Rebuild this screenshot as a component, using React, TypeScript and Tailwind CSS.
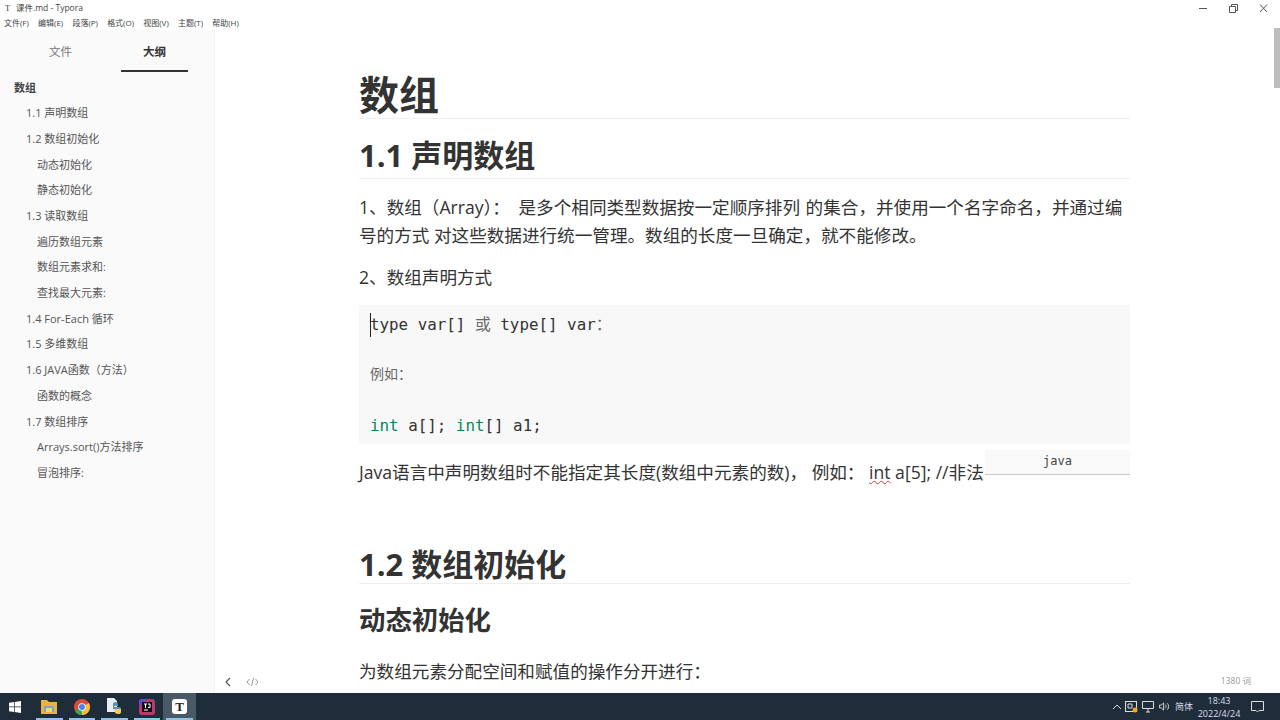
import React from "react";

const outline: [string, number][] = [
  ["1.1 声明数组", 1],
  ["1.2 数组初始化", 1],
  ["动态初始化", 2],
  ["静态初始化", 2],
  ["1.3 读取数组", 1],
  ["遍历数组元素", 2],
  ["数组元素求和:", 2],
  ["查找最大元素:", 2],
  ["1.4 For-Each 循环", 1],
  ["1.5 多维数组", 1],
  ["1.6 JAVA函数（方法）", 1],
  ["函数的概念", 2],
  ["1.7 数组排序", 1],
  ["Arrays.sort()方法排序", 2],
  ["冒泡排序:", 2],
];
const menus = ["文件(F)", "编辑(E)", "段落(P)", "格式(O)", "视图(V)", "主题(T)", "帮助(H)"];
const ui = "font-['Open_Sans','Noto_Sans_CJK_SC',sans-serif]";

function Running({ active, children }: { active?: boolean; children: React.ReactNode }) {
  return (
    <div className={`relative flex h-full w-[32.6px] items-center justify-center ${active ? "bg-[#4a5966]" : ""}`}>
      {children}
      <div className="absolute bottom-0 left-[3px] right-[3px] h-[2px] bg-[#8fc3e8]" />
    </div>
  );
}

export default function App() {
  return (
    <div className={`flex h-[720px] w-[1280px] flex-col overflow-hidden bg-white text-[#333] ${ui}`}>
      <div className="flex h-[15px] shrink-0 items-center pl-[5px] pt-[1px] text-[8.5px] text-[#444]">
        <span className="w-[11px] font-['Liberation_Serif',serif]">T</span>
        <span>课件.md - Typora</span>
        <div className="ml-auto flex items-center">
          <svg width="100" height="15" viewBox="0 0 100 15" fill="none" stroke="#555" strokeWidth="1">
            <path d="M19 7.500h8" />
            <path d="M49.500 5.500h6v6h-6zM51.500 5.500v-2h6v6h-2" />
            <path d="M80 3.500l7 7.500M87 3.500l-7 7.500" />
          </svg>
        </div>
      </div>
      <div className="flex h-[15px] shrink-0 items-center gap-[9.200px] pl-[4px] text-[8px] text-[#444]">
        {menus.map((m) => (
          <span key={m}>{m}</span>
        ))}
      </div>

      <div className="relative flex min-h-0 flex-1">
        <aside className="flex w-[215px] shrink-0 flex-col border-r border-[#f3f3f3] bg-[#fafafa]">
          <div className="flex h-[42px] shrink-0 pl-[27px] text-[11.5px]">
            <div className="flex w-[67px] items-start justify-center pt-[13px] text-[#777]">文件</div>
            <div className="ml-[27px] flex h-[42px] w-[67px] items-start justify-center border-b-[2px] border-[#333] pt-[13px] font-bold text-[#333]">
              大纲
            </div>
          </div>
          <div className="flex flex-col pt-[3px] text-[11px] text-[#555]">
            <div className="flex h-[25.7px] items-center pl-[14px] font-bold text-[#444]">数组</div>
            {outline.map(([t, l]) => (
              <div key={t} className={`flex h-[25.7px] items-center ${l === 1 ? "pl-[26px]" : "pl-[37px]"}`}>
                {t}
              </div>
            ))}
          </div>
        </aside>

        <main className="min-w-0 flex-1 overflow-hidden pl-[144px] pr-[150px] text-[17.6px] text-[#333]">
          <h1 className="mt-[37px] h-[52px] border-b border-[#eee] text-[40px] font-bold leading-[56px]">数组</h1>
          <h2 className="mt-[8px] h-[52px] border-b border-[#eee] text-[31px] font-bold leading-[56px]">1.1 声明数组</h2>
          <p className="mt-[14px] whitespace-nowrap leading-[28px]">
            1、数组（Array）： <span className="ml-[4px]">是多个相同类型数据按一定顺序排列</span> <span className="ml-[1px]">的集合，并使用一个名字命名，并通过编</span>
            <br />
            号的方式 对这些数据进行统一管理。数组的长度一旦确定，就不能修改。
          </p>
          <p className="mt-[14px] leading-[28px]">2、数组声明方式</p>
          <div className="relative mt-[14px] h-[139px] bg-[#f8f8f8] pl-[11px] pt-[7px] font-['DejaVu_Sans_Mono','Noto_Sans_CJK_SC',monospace] text-[15.85px] leading-[25.2px] text-[#333]">
            <div className="absolute left-[11px] top-[8px] h-[24px] w-px bg-[#222]" />
            <div>type var[] <span className="text-[#666]">或</span> type[] var<span className="text-[#666]">：</span></div>
            <div className="h-[25.2px]" />
            <div className="text-[14px] text-[#666]">例如：</div>
            <div className="h-[25.2px]" />
            <div><span className="text-[#008855]">int</span> a[]; <span className="text-[#008855]">int</span>[] a1;</div>
            <div className="absolute right-0 top-[145px] flex h-[25px] w-[145px] items-center justify-center border-b border-[#c8c8c8] bg-[#f9f9f9] text-[12px] text-[#444]">
              java
            </div>
          </div>
          <p className="mt-[14px] leading-[28px] whitespace-nowrap">
            Java语言中声明数组时不能指定其长度(数组中元素的数)， 例如： <span className="underline decoration-wavy decoration-[#d33] decoration-1">int</span> a[5]; //非法
          </p>
          <h2 className="mt-[62px] h-[36px] border-b border-[#eee] text-[31px] font-bold leading-[32px]">1.2 数组初始化</h2>
          <h3 className="mt-[18px] text-[26.4px] font-bold leading-[36px]">动态初始化</h3>
          <p className="mt-[19px] leading-[28px]">为数组元素分配空间和赋值的操作分开进行：</p>
        </main>

        <div className="absolute right-0 top-[-2px] h-[60px] w-[6px] bg-[#bdbdbd]" />
        <div className="absolute bottom-0 left-[216px] right-0 flex h-[23px] items-center pl-[8px] pr-[29px] text-[#888]">
          <svg width="8" height="10" viewBox="0 0 8 10" fill="none" stroke="#555" strokeWidth="1.2"><path d="M6 1L2 5l4 4" /></svg>
          <svg className="ml-[14px]" width="13" height="10" viewBox="0 0 13 10" fill="none" stroke="#999" strokeWidth="1"><path d="M3.500 2L1 5l2.500 3M9.500 2L12 5 9.500 8M7.500 1L5.500 9" /></svg>
          <span className="ml-auto text-[8.5px] text-[#999]">1380 词</span>
        </div>
      </div>

      <footer className="flex h-[27px] shrink-0 items-center bg-[#1f2d3a] text-white">
        <div className="flex w-[33px] justify-center pr-[3px]">
          <svg width="12" height="12" viewBox="0 0 12 12" fill="#fff"><path d="M0 1.800l5-.7v4.500H0zM5.700 1l6.300-1v5.600H5.700zM0 6.300h5v4.600l-5-.7zM5.700 6.300H12V12l-6.300-1z" /></svg>
        </div>
        <div className="flex h-full items-center">
          <Running>
            <svg width="16" height="14" viewBox="0 0 16 14"><path d="M0 0h6l2 2h8v12H0z" fill="#e8b33f" /><path d="M3 6h10v6H3z" fill="#7aa7c7" /><path d="M5 8h6v4H5z" fill="#f4d57e" /></svg>
          </Running>
          <Running>
            <svg width="16" height="16" viewBox="0 0 16 16"><circle cx="8" cy="8" r="8" fill="#e04a3a" /><path d="M8 8L1 12a8 8 0 0 0 7 4z" fill="#3aa757" /><path d="M8 8l6.900-4a8 8 0 0 1-6.900 12z" fill="#fbc02d" /><circle cx="8" cy="8" r="3.800" fill="#fff" /><circle cx="8" cy="8" r="3" fill="#4285f4" /></svg>
          </Running>
          <Running>
            <svg width="16" height="17" viewBox="0 0 16 17"><path d="M1 0h7l3 3v11H1z" fill="#e8edf2" /><path d="M7 6c0-1 1-2 2.500-2S12 5 12 6v2H8v1h5c1.500 0 2 .8 2 2H7z" fill="#5a8fc0" /><path d="M7 11h8v3c0 1.500-1 2-3 2s-3-.8-3-2v-1z" fill="#f0cf55" /></svg>
          </Running>
          <Running>
            <svg width="16" height="16" viewBox="0 0 16 16"><rect width="16" height="16" rx="3" fill="#c0366f" /><path d="M0 8V3a3 3 0 0 1 3-3h5z" fill="#5b4dc7" /><rect x="3" y="3" width="10" height="10" fill="#111" /><path d="M5 5h3M6.500 5v4M9 5h2v3.500H9M5 11h4" stroke="#fff" strokeWidth="1" fill="none" /></svg>
          </Running>
          <Running active>
            <div className="flex h-[15px] w-[15px] items-center justify-center rounded-[3px] bg-white font-['Liberation_Serif',serif] text-[13px] font-bold leading-none text-[#222]">T</div>
          </Running>
        </div>
        <div className="ml-auto flex h-full items-center text-[9px] text-[#dde]">
          <svg width="10" height="6" viewBox="0 0 10 6" fill="none" stroke="#ddd"><path d="M1 5l4-4 4 4" /></svg>
          <svg className="ml-[3px]" width="13" height="12" viewBox="0 0 13 12" fill="none" stroke="#ddd"><rect x=".5" y=".5" width="11" height="10" /><path d="M3 3h4v4H3z" /><circle cx="10" cy="9" r="2.500" fill="#f5a623" stroke="none" /></svg>
          <svg className="ml-[4px]" width="13" height="12" viewBox="0 0 13 12" fill="none" stroke="#ddd"><path d="M.5.5h11v7H.5zM4 11h4M6 7.500V11" /></svg>
          <svg className="ml-[4px]" width="11" height="11" viewBox="0 0 12 11" fill="none" stroke="#ddd"><path d="M.5 4v3h2L5 9.500v-8L2.500 4zM7 3.500c1 1 1 3 0 4M9 2c2 2 2 5 0 7" /></svg>
          <span className="ml-[5px]">简体</span>
          <div className="ml-[5px] flex w-[42px] flex-col items-center leading-[13px]">
            <span>18:43</span>
            <span>2022/4/24</span>
          </div>
          <svg className="ml-[11px] mr-[16px]" width="13" height="12" viewBox="0 0 13 12" fill="none" stroke="#ddd"><path d="M.5.5h12v9H8L6.500 11 5 9.500H.5z" /></svg>
        </div>
      </footer>
    </div>
  );
}
